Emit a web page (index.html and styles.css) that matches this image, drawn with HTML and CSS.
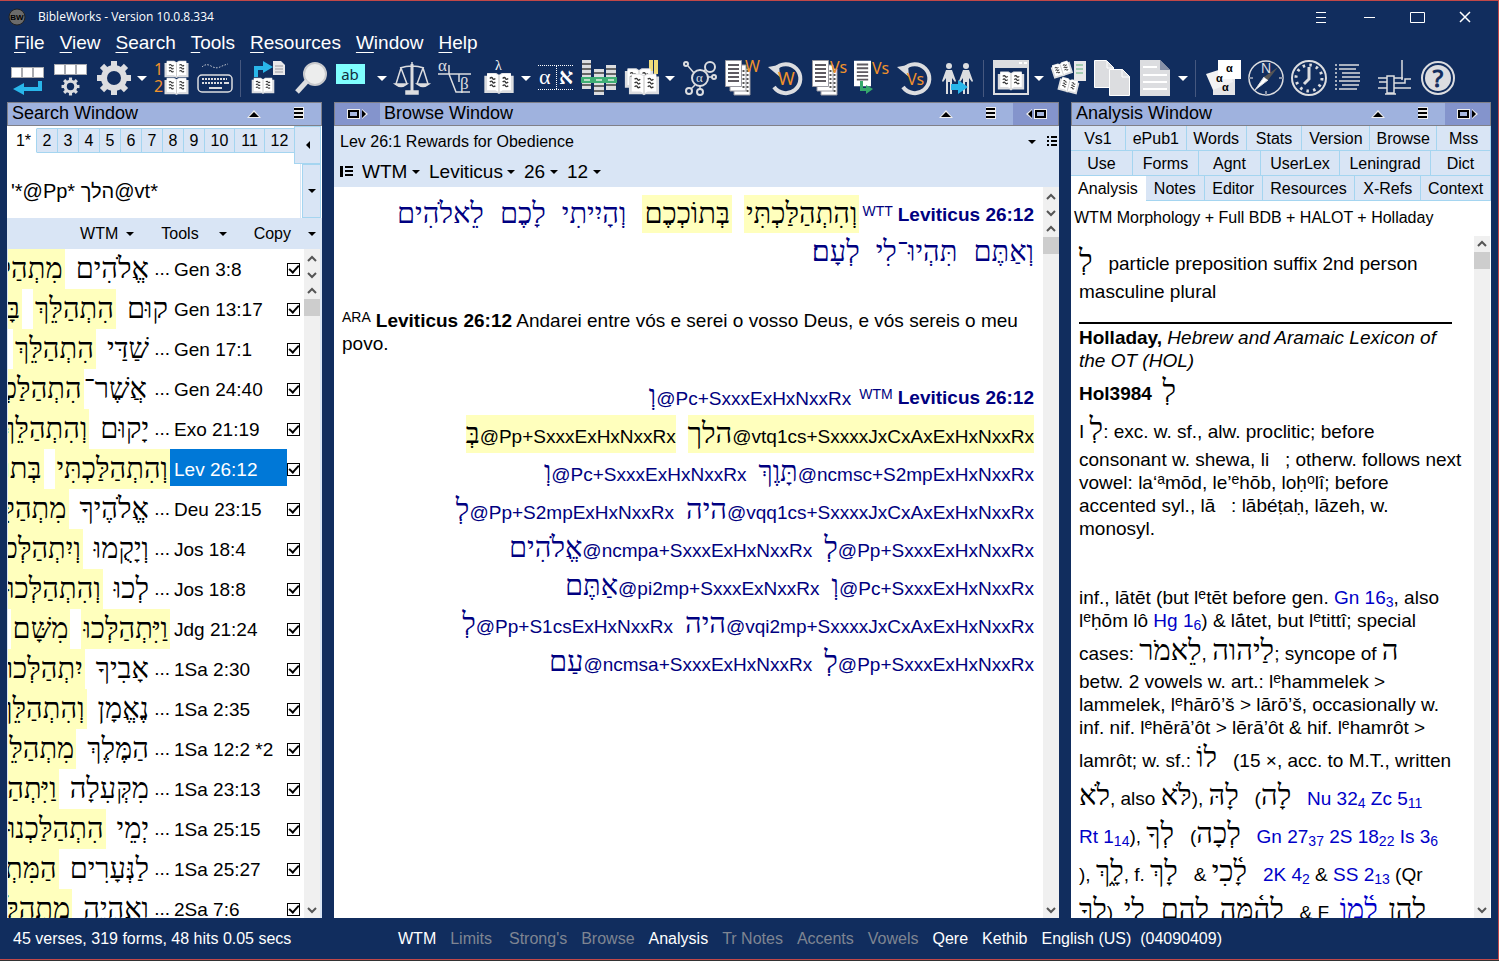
FILE: index.html
```html
<!DOCTYPE html>
<html lang="en">
<head>
<meta charset="utf-8">
<title>BibleWorks - Version 10.0.8.334</title>
<link rel="stylesheet" href="styles.css">
</head>
<body>
<svg class="defs" aria-hidden="true">
  <symbol id="gear" viewBox="-18 -18 36 36">
    <g fill="#dcdde0"><rect x="-3" y="-17" width="6" height="34"/><rect x="-3" y="-17" width="6" height="34" transform="rotate(45)"/><rect x="-3" y="-17" width="6" height="34" transform="rotate(90)"/><rect x="-3" y="-17" width="6" height="34" transform="rotate(135)"/><circle r="13"/></g>
    <circle r="7" fill="#112d5e"/>
  </symbol>
  <symbol id="book" viewBox="0 0 34 24">
    <path d="M1 4h3V1h10l3 2 3-2h10v3h3v19H19l-2 1-2-1H1z" fill="#dcdde0"/>
    <path d="M4 2h9l4 2v18l-4-2H4zM30 2h-9l-4 2v18l4-2h9z" fill="#fff"/>
    <path d="M17 4v18" stroke="#bbb" stroke-width="1"/>
    <path d="M7 7q2-2 3 0t3 0M7 11q2-2 3 0t3 0M7 15q2-2 3 0t3 0M21 7q2-2 3 0t3 0M21 11q2-2 3 0t3 0M21 15q2-2 3 0t3 0" fill="none" stroke="#333" stroke-width="1.5"/>
  </symbol>
  <symbol id="page" viewBox="0 0 18 27">
    <path d="M0 0h18v27H0z" fill="#fff"/><path d="M3 4h12M3 8h12M3 12h12M3 16h12M3 20h12" stroke="#5f5b62" stroke-width="2"/>
  </symbol>
  <symbol id="pages" viewBox="0 0 26 36">
    <g fill="#fff" stroke="#9a9aa2" stroke-width="1"><path d="M9 9h16v26H9z"/><path d="M5 5h16v26H5z"/><path d="M.5.5h16v26H.5z"/></g>
    <path d="M3 5h11M3 9h11M3 13h11M3 17h11M3 21h11" stroke="#5f5b62" stroke-width="2"/><path d="M18.500 10v18M22.500 10v22" stroke="#555" stroke-width="2" stroke-dasharray="2 2"/>
  </symbol>
  <symbol id="loop" viewBox="0 0 36 36">
    <path d="M7 9A14.500 14.500 0 1 1 6 27" fill="none" stroke="#dcdde0" stroke-width="4"/><path d="M0 7l11-2 1 12z" fill="#dcdde0"/>
  </symbol>
  <symbol id="person" viewBox="0 0 14 32">
    <circle cx="7" cy="3" r="3" fill="#dcdde0"/><path d="M4 7h6l4 11-1 1-3-4v16H8V19H6v12H4V15l-3 4-1-1z" fill="#dcdde0"/>
  </symbol>
  <symbol id="up" viewBox="0 0 16 16"><path d="M4 10l4-4 4 4" fill="none" stroke="#555" stroke-width="2"/></symbol>
  <symbol id="down" viewBox="0 0 16 16"><path d="M4 6l4 4 4-4" fill="none" stroke="#555" stroke-width="2"/></symbol>
  <symbol id="raise" viewBox="0 0 16 12"><path d="M1 10l7-8 7 8z" fill="#eee"/><path d="M3 9l5-5 5 5z" fill="#000"/></symbol>
  <symbol id="bars" viewBox="0 0 12 14"><path d="M1 2h10M1 6h10M1 10h10" stroke="#eee" stroke-width="4"/><path d="M1 2h9M1 6h9M1 10h9" stroke="#000" stroke-width="2"/></symbol>
  <symbol id="dock" viewBox="0 0 22 12"><path d="M1.500 2.500h10v7h-10z" fill="none" stroke="#eee" stroke-width="3"/><path d="M2 3h9v6H2z" fill="#a8b8e0" stroke="#000" stroke-width="2"/><path d="M15 1v10l6-5z" fill="#eee"/><path d="M15 2v8l4-4z"/></symbol>
</svg>

<div class="app">
  <header class="titlebar">
    <svg class="logo" viewBox="0 0 18 18"><circle cx="9" cy="9" r="8" fill="#6b6b6b" stroke="#222" stroke-width="1"/><text x="9" y="12" text-anchor="middle" font-size="8" font-weight="bold" font-family="Liberation Sans">BW</text></svg>
    <h1>BibleWorks - Version 10.0.8.334</h1>
    <div class="winbtns">
      <button aria-label="Options"><svg viewBox="0 0 16 16"><path d="M3 3.500h10M3 8.500h10M3 13.500h10" stroke="#fff"/></svg></button>
      <button aria-label="Minimize"><svg viewBox="0 0 16 16"><path d="M3 8.500h11" stroke="#fff"/></svg></button>
      <button aria-label="Maximize"><svg viewBox="0 0 16 16"><path d="M1.500 3.500h14v10h-14z" fill="none" stroke="#fff"/></svg></button>
      <button aria-label="Close"><svg viewBox="0 0 16 16"><path d="M3 3l10 10M13 3L3 13" stroke="#fff" stroke-width="1.500"/></svg></button>
    </div>
  </header>

  <nav class="menubar">
    <button><u>F</u>ile</button><button><u>V</u>iew</button><button><u>S</u>earch</button><button><u>T</u>ools</button><button><u>R</u>esources</button><button><u>W</u>indow</button><button><u>H</u>elp</button>
  </nav>

  <div class="toolbar" role="toolbar">
    <button aria-label="Command line"><svg viewBox="0 0 36 36"><path d="M1 7h33v11H1z" fill="#a9abb0"/><path d="M2 8h9v9H2zM13 8h9v9h-9zM24 8h9v9h-9z" fill="#fff"/><path d="M28 21h4v10H14v4L3 29l11-6v4h14z" fill="#29b6ea"/></svg></button>
    <button aria-label="Command options"><svg viewBox="0 0 36 36"><path d="M1 4h33v11H1z" fill="#a9abb0"/><path d="M2 5h9v9H2zM13 5h9v9h-9zM24 5h9v9h-9z" fill="#fff"/><use href="#gear" x="8" y="17" width="19" height="19"/></svg></button>
    <button aria-label="Setup"><svg viewBox="0 0 36 36"><use href="#gear" x="0" y="0" width="36" height="36"/></svg></button>
    <button class="dd" aria-label="Setup menu"></button>
    <button aria-label="Parallel versions"><svg viewBox="0 0 36 36"><text class="or" x="0" y="15" font-size="16">1</text><text class="or" x="0" y="32" font-size="16">2</text><use href="#book" x="9" y="0" width="27" height="18"/><use href="#book" x="9" y="17" width="27" height="18"/></svg></button>
    <button aria-label="Keyboard"><svg viewBox="0 0 36 36"><g fill="none" stroke="#dcdde0"><rect x="1" y="15" width="34" height="17" rx="4" stroke-width="1.500"/><path d="M5 7q4-4 9-1t9 1 8-3" stroke-dasharray="1.500 1.500"/><path d="M5 19h25M5 23h20" stroke-width="2" stroke-dasharray="2 1"/><path d="M27 23h5M12 28h13" stroke-width="2"/></g></svg></button>
    <span class="sep"></span>
    <button aria-label="Copy to editor"><svg viewBox="0 0 36 36"><path d="M4 17V6h9V1l10 6-10 6V10H8v7z" fill="#29b6ea"/><path d="M23 1h8l4 4v10H23z" fill="#e8e8ea"/><path d="M25 6h8M25 9h8M25 12h8" stroke="#9a9aa2"/><use href="#book" x="1" y="17" width="24" height="17"/></svg></button>
    <button aria-label="Find"><svg viewBox="0 0 36 36"><circle cx="22" cy="14" r="11" fill="#eceded" stroke="#c9cacd" stroke-width="2"/><path d="M14 21L4 32" stroke="#dcdde0" stroke-width="5"/></svg></button>
    <button aria-label="Highlight"><svg viewBox="0 0 36 36"><path d="M0 4h29v20H0z" fill="#80ffff"/><text x="14" y="20" text-anchor="middle" font-size="15" font-family="Noto Sans" fill="#112d3e">ab</text></svg></button>
    <button class="dd" aria-label="Highlight menu"></button>
    <button aria-label="Compare"><svg viewBox="0 0 36 36" fill="none" stroke="#dcdde0" stroke-width="1.500"><path d="M18 2v30M6 8q12-4 24 0M7 8L2 24M7 8l6 16M29 8l-6 16M29 8l5 16"/><path d="M1 24h12q-6 5-12 0zM23 24h12q-6 5-12 0zM12 31h12v3H12z" fill="#dcdde0"/><path d="M18 4v28" stroke-width="3"/></svg></button>
    <button aria-label="Alpha beta"><svg viewBox="0 0 36 36" fill="#dcdde0"><path d="M1 14h33M12 5v9M12 14l7 18h14M22 14v8" fill="none" stroke="#dcdde0" stroke-width="1.500"/><text x="1" y="11" font-size="17" font-family="Liberation Serif">α</text><text x="23" y="29" font-size="17" font-family="Liberation Serif">β</text></svg></button>
    <button aria-label="Lexicon"><svg viewBox="0 0 36 36"><text x="15" y="10" font-size="14" font-family="Liberation Serif" fill="#fff">λ</text><use href="#book" x="3" y="12" width="32" height="22"/></svg></button>
    <button class="dd" aria-label="Lexicon menu"></button>
    <button aria-label="Interlinear"><svg viewBox="0 0 36 36" fill="#fff"><path d="M0 5.500h36M0 29.500h36M18.500 6v23" stroke="#fff" stroke-dasharray="1 1"/><text x="1" y="24" font-size="22" font-family="Liberation Serif">α</text><text x="21" y="24" font-size="22" font-weight="bold" font-family="Liberation Serif">א</text></svg></button>
    <button aria-label="Stack"><svg viewBox="0 0 36 36"><path d="M1 0h9v29H1zM13 9h10v26H13zM25 5h10v25H25z" fill="#dcdde0"/><path d="M1 4h9M1 9h9M1 14h9M1 25h9M13 13h10M13 26h10M13 31h10M25 9h10M25 14h10M25 25h10" stroke="#666" stroke-width="2"/><path d="M0 17h36v6H0z" fill="#3fae74"/><path d="M3 20h6M15 20h6M27 20h6" stroke="#b6e0c4" stroke-width="2"/></svg></button>
    <button aria-label="Notebooks"><svg viewBox="0 0 36 36"><path d="M25 0h4v14h-4zM30 0h4v14h-4z" fill="#f2dd79"/><use href="#book" x="0" y="7" width="30" height="22"/><use href="#book" x="4" y="12" width="32" height="24"/></svg></button>
    <button class="dd" aria-label="Notebooks menu"></button>
    <button aria-label="Graph"><svg viewBox="0 0 36 36" fill="none" stroke="#dcdde0" stroke-width="2"><circle cx="18" cy="18" r="8"/><circle cx="28" cy="7" r="5"/><circle cx="4" cy="4" r="2"/><circle cx="32" cy="17" r="2"/><circle cx="7" cy="31" r="3"/><circle cx="18" cy="32" r="3"/><path d="M6 6l6 7M22 11l2-2M26 17h4M13 25l-4 4M18 26v3" stroke-width="1.500"/><text x="14" y="22" font-size="13" fill="#dcdde0" stroke="none" font-family="Liberation Serif">α</text></svg></button>
    <button aria-label="Word list"><svg viewBox="0 0 36 36"><use href="#pages" x="0" y="0" width="26" height="36"/><text class="or" x="20" y="12" font-size="16">W</text></svg></button>
    <button aria-label="Word history"><svg viewBox="0 0 36 36"><use href="#loop" x="0" y="0" width="36" height="36"/><text class="or" x="10" y="25" font-size="18">W</text></svg></button>
    <button aria-label="Verse list"><svg viewBox="0 0 36 36"><use href="#pages" x="1" y="0" width="26" height="36"/><text class="or" x="19" y="13" font-size="16">Vs</text></svg></button>
    <button aria-label="Go to verse"><svg viewBox="0 0 36 36"><use href="#page" x="0" y="0" width="17" height="27"/><text class="or" x="18" y="14" font-size="16">Vs</text><path d="M6 21v10h6v3l7-5-7-4v3H9v-7z" fill="#36a96c"/></svg></button>
    <button aria-label="Verse history"><svg viewBox="0 0 36 36"><use href="#loop" x="0" y="0" width="36" height="36"/><text class="or" x="10" y="25" font-size="16">Vs</text></svg></button>
    <button aria-label="Synchronize"><svg viewBox="0 0 36 36"><use href="#person" x="2" y="3" width="14" height="32"/><use href="#person" x="19" y="3" width="14" height="32"/><path d="M11 24h7v-4l10 7-10 7v-4h-7z" fill="#29b6ea"/></svg></button>
    <span class="sep"></span>
    <button aria-label="Resource window"><svg viewBox="0 0 36 36"><path d="M1 1h34v33H1z" fill="#112d5e" stroke="#dcdde0" stroke-width="2"/><path d="M0 0h36v8H0z" fill="#dcdde0"/><path d="M26 2h3v2h-3zM31 2h3v2h-3z" fill="#fff"/><use href="#book" x="4" y="10" width="28" height="21"/></svg></button>
    <button class="dd" aria-label="Resource menu"></button>
    <button aria-label="Arrange"><svg viewBox="0 0 36 36"><use href="#book" x="0" y="2" width="21" height="15" transform="rotate(-18 10 9)"/><use href="#book" x="7" y="18" width="21" height="15" transform="rotate(14 18 26)"/><path d="M23 1h12v20H23z" fill="#e8e8ea"/><path d="M25 5h7M25 9h7M25 13h7" stroke="#8fc3a0" stroke-width="1.500"/></svg></button>
    <button aria-label="Copy"><svg viewBox="0 0 36 36" fill="#dcdde0" stroke="#fff"><path d="M.5.5h12l7 7v20H.5z"/><path d="M15.500 9.500h13l7 7v19h-20z"/><path d="M28 9v8h8M13 1v7h7" fill="none"/></svg></button>
    <button aria-label="Document"><svg viewBox="0 0 36 36"><path d="M3 0h20l10 10v26H3z" fill="#dcdde0"/><path d="M23 0v10h10z" fill="#8791a8"/><path d="M6 7h14M6 15h24M6 22h24M6 29h24" stroke="#fff" stroke-width="2"/></svg></button>
    <button class="dd" aria-label="Document menu"></button>
    <span class="sep"></span>
    <button aria-label="Flashcards"><svg viewBox="0 0 36 36" font-family="Liberation Sans" font-weight="bold" font-size="11"><path d="M8 18h22v17H8z" fill="#e4e4e6"/><path d="M1 14l22-7 5 15-20 8z" fill="#f2f2f3"/><path d="M13 0h23v19H13z" fill="#fff"/><text x="21" y="12">α</text><text x="11" y="22">α</text><text x="17" y="31">α</text></svg></button>
    <button aria-label="Navigate"><svg viewBox="0 0 36 36" fill="none" stroke="#dcdde0"><circle cx="18" cy="18" r="17" stroke-width="1.500"/><path d="M18 31v4M1 18h4M31 18h4" stroke="#8791a8" stroke-width="2"/><path d="M7 30l9-13 4 3z" fill="#fff"/><path d="M16 17L30 7 20 20z" fill="#555" stroke="none"/><text x="13" y="13" font-size="14" fill="#dcdde0" stroke="none" font-family="Liberation Sans">N</text></svg></button>
    <button aria-label="Timeline"><svg viewBox="0 0 36 36" fill="none" stroke="#dcdde0"><circle cx="18" cy="18" r="17" stroke-width="2"/><circle cx="18" cy="18" r="13" stroke-width="3" stroke-dasharray="2.500 4.300"/><path d="M18 7v12l-5 5" stroke-width="3"/></svg></button>
    <button aria-label="Outline"><svg viewBox="0 0 36 36" stroke="#dcdde0" stroke-width="1.500"><path d="M1 5h2M1 9h2M1 13h2M1 17h2M1 21h2M1 25h2M1 29h2M5 5h20M5 9h17M8 13h18M8 17h18M5 21h21M8 25h17M5 29h18"/></svg></button>
    <button aria-label="Diagram"><svg viewBox="0 0 36 36" fill="none" stroke="#dcdde0" stroke-width="1.500"><path d="M25 0v20M1 18h9M2 22h8M1 28h9M10 16h7v17h-7zM17 18h9M17 23h8M17 28h17M25 23h3v-4h6M8 34h11"/></svg></button>
    <button aria-label="Help"><svg viewBox="0 0 36 36"><circle cx="18" cy="18" r="16" fill="none" stroke="#dcdde0" stroke-width="2"/><circle cx="18" cy="18" r="13" fill="#dcdde0"/><text x="18" y="27" text-anchor="middle" font-size="24" font-family="Noto Sans" fill="#112d5e" stroke="#112d5e">?</text></svg></button>
  </div>

  <main class="panels">
    <section class="panel search">
      <div class="phead"><h2>Search Window</h2><button aria-label="Raise"><svg class="i-raise"><use href="#raise"/></svg></button><button aria-label="Menu"><svg class="i-bars"><use href="#bars"/></svg></button></div>
      <div class="stop">
        <div class="snum"><button class="on">1*</button><button>2</button><button>3</button><button>4</button><button>5</button><button>6</button><button>7</button><button>8</button><button>9</button><button class="w">10</button><button class="w">11</button><button class="w">12</button></div>
        <button class="prev" aria-label="Previous"></button>
        <input class="query" aria-label="Command line" value="'*@Pp* הלך@vt*">
        <button class="hist" aria-label="History"></button>
      </div>
      <div class="sbar"><button class="caret">WTM</button><button class="caret t">Tools</button><button class="caret">Copy</button></div>
      <div class="sbody">
        <ul class="hits">
          <li><div class="hx"><i>...</i><b>אֱלֹהִים</b><mark>מִתְהַלֵּךְ</mark></div><label for="c1">Gen 3:8</label><input id="c1" type="checkbox" checked></li>
          <li><div class="hx"><b>קוּם</b><mark>הִתְהַלֵּךְ</mark><mark>בָּאָרֶץ</mark></div><label for="c2">Gen 13:17</label><input id="c2" type="checkbox" checked></li>
          <li><div class="hx"><i>...</i><b>שַׁדַּי</b><mark>הִתְהַלֵּךְ</mark></div><label for="c3">Gen 17:1</label><input id="c3" type="checkbox" checked></li>
          <li><div class="hx"><i>...</i><span class="joined"><b>אֲשֶׁר־</b><mark>הִתְהַלַּכְתִּי</mark></span></div><label for="c4">Gen 24:40</label><input id="c4" type="checkbox" checked></li>
          <li><div class="hx"><i>...</i><b>יָקוּם</b><mark>וְהִתְהַלֵּךְ</mark></div><label for="c5">Exo 21:19</label><input id="c5" type="checkbox" checked></li>
          <li class="sel"><div class="hx"><mark>וְהִתְהַלַּכְתִּי</mark><mark>בְּתוֹכְכֶם</mark></div><label for="c6">Lev 26:12</label><input id="c6" type="checkbox" checked></li>
          <li><div class="hx"><i>...</i><b>אֱלֹהֶיךָ</b><mark>מִתְהַלֵּךְ</mark></div><label for="c7">Deu 23:15</label><input id="c7" type="checkbox" checked></li>
          <li><div class="hx"><i>...</i><b>וְיָקֻמוּ</b><mark>וְיִתְהַלְּכוּ</mark></div><label for="c8">Jos 18:4</label><input id="c8" type="checkbox" checked></li>
          <li><div class="hx"><i>...</i><b>לְכוּ</b><mark>וְהִתְהַלְּכוּ</mark></div><label for="c9">Jos 18:8</label><input id="c9" type="checkbox" checked></li>
          <li><div class="hx"><mark>וַיִּתְהַלְּכוּ</mark><mark>מִשָּׁם</mark></div><label for="c10">Jdg 21:24</label><input id="c10" type="checkbox" checked></li>
          <li><div class="hx"><i>...</i><b>אָבִיךָ</b><mark>יִתְהַלְּכוּ</mark></div><label for="c11">1Sa 2:30</label><input id="c11" type="checkbox" checked></li>
          <li><div class="hx"><i>...</i><b>נֶאֱמָן</b><mark>וְהִתְהַלֵּךְ</mark></div><label for="c12">1Sa 2:35</label><input id="c12" type="checkbox" checked></li>
          <li><div class="hx"><i>...</i><b>הַמֶּלֶךְ</b><mark>מִתְהַלֵּךְ</mark></div><label for="c13">1Sa 12:2 *2</label><input id="c13" type="checkbox" checked></li>
          <li><div class="hx"><i>...</i><b>מִקְּעִלָה</b><mark>וַיִּתְהַלְּכוּ</mark></div><label for="c14">1Sa 23:13</label><input id="c14" type="checkbox" checked></li>
          <li><div class="hx"><i>...</i><b>יְמֵי</b><mark>הִתְהַלַּכְנוּ</mark></div><label for="c15">1Sa 25:15</label><input id="c15" type="checkbox" checked></li>
          <li><div class="hx"><i>...</i><b>לַנְּעָרִים</b><mark>הַמִּתְהַלְּכִים</mark></div><label for="c16">1Sa 25:27</label><input id="c16" type="checkbox" checked></li>
          <li><div class="hx"><i>...</i><b>וָאֶהְיֶה</b><mark>מִתְהַלֵּךְ</mark></div><label for="c17">2Sa 7:6</label><input id="c17" type="checkbox" checked></li>
        </ul>
        <div class="scroll split"><button aria-label="Previous"><svg><use href="#up"/></svg></button><button aria-label="Next"><svg><use href="#down"/></svg></button><button aria-label="Scroll up"><svg><use href="#up"/></svg></button><span class="thumb"></span><button class="end" aria-label="Scroll down"><svg><use href="#down"/></svg></button></div>
      </div>
    </section>

    <section class="panel browse">
      <div class="phead"><button class="dk" aria-label="Dock left"><svg class="i-dock"><use href="#dock"/></svg></button><h2>Browse Window</h2><button aria-label="Raise"><svg class="i-raise"><use href="#raise"/></svg></button><button aria-label="Menu"><svg class="i-bars"><use href="#bars"/></svg></button><button class="dk" aria-label="Dock right"><svg class="i-dock flip"><use href="#dock"/></svg></button></div>
      <div class="bhead">
        <div class="crumb"><span>Lev 26:1 Rewards for Obedience</span><button class="caret" aria-label="Headings"></button><svg class="dots" viewBox="0 0 10 11"><path d="M0 1h2M4 1h6M0 5h2M4 5h6M0 9h2M4 9h6" stroke="#000" stroke-width="2"/></svg></div>
        <div class="picker"><svg class="plist" viewBox="0 0 13 11"><path d="M0 0h3v11H0z"/><path d="M5 1h8M5 5h8M5 9h8" stroke="#000" stroke-width="2"/></svg>
          <label class="pick"><select aria-label="Version"><option>WTM</option></select></label><label class="pick"><select aria-label="Book"><option>Leviticus</option></select></label><label class="pick"><select aria-label="Chapter"><option>26</option></select></label><label class="pick"><select aria-label="Verse"><option>12</option></select></label>
        </div>
      </div>
      <div class="bbody">
        <div class="verses">
          <div class="vl" dir="rtl"><span class="ref" dir="ltr"><sup>WTT</sup><strong>Leviticus 26:12</strong></span><mark>וְהִתְהַלַּכְתִּי</mark><mark>בְּתוֹכְכֶם</mark><b>וְהָיִיתִי</b><b>לָכֶם</b><b>לֵאלֹהִים</b></div>
          <div class="vl" dir="rtl"><b>וְאַתֶּם</b><b>תִּהְיוּ־לִי</b><b>לְעָם׃</b></div>
          <p class="ara"><sup>ARA</sup><strong>Leviticus 26:12</strong> Andarei entre vós e serei o vosso Deus, e vós sereis o meu povo.</p>
          <div class="ml"><span><b>וְ</b>@Pc+SxxxExHxNxxRx</span><span class="ref"><sup>WTM</sup><strong>Leviticus 26:12</strong></span></div>
          <div class="ml"><mark><b>בְּ</b>@Pp+SxxxExHxNxxRx</mark><mark><b>הלך</b>@vtq1cs+SxxxxJxCxAxExHxNxxRx</mark></div>
          <div class="ml"><span><b>וְ</b>@Pc+SxxxExHxNxxRx</span><span><b>תָּוֶךְ</b>@ncmsc+S2mpExHxNxxRx</span></div>
          <div class="ml"><span><b>לְ</b>@Pp+S2mpExHxNxxRx</span><span><b>היה</b>@vqq1cs+SxxxxJxCxAxExHxNxxRx</span></div>
          <div class="ml"><span><b>אֱלֹהִים</b>@ncmpa+SxxxExHxNxxRx</span><span><b>לְ</b>@Pp+SxxxExHxNxxRx</span></div>
          <div class="ml"><span><b>אַתֶּם</b>@pi2mp+SxxxExNxxRx</span><span><b>וְ</b>@Pc+SxxxExHxNxxRx</span></div>
          <div class="ml"><span><b>לְ</b>@Pp+S1csExHxNxxRx</span><span><b>היה</b>@vqi2mp+SxxxxJxCxAxExHxNxxRx</span></div>
          <div class="ml"><span><b>עַם</b>@ncmsa+SxxxExHxNxxRx</span><span><b>לְ</b>@Pp+SxxxExHxNxxRx</span></div>
        </div>
        <div class="scroll split"><button aria-label="Previous verse"><svg><use href="#up"/></svg></button><button aria-label="Next verse"><svg><use href="#down"/></svg></button><button aria-label="Scroll up"><svg><use href="#up"/></svg></button><span class="thumb"></span><button class="end" aria-label="Scroll down"><svg><use href="#down"/></svg></button></div>
      </div>
    </section>

    <section class="panel analysis">
      <div class="phead"><h2>Analysis Window</h2><button aria-label="Raise"><svg class="i-raise"><use href="#raise"/></svg></button><button aria-label="Menu"><svg class="i-bars"><use href="#bars"/></svg></button><button class="dk" aria-label="Dock"><svg class="i-dock"><use href="#dock"/></svg></button></div>
      <div class="tabs r1"><button>Vs1</button><button>ePub1</button><button>Words</button><button>Stats</button><button>Version</button><button>Browse</button><button>Mss</button></div>
      <div class="tabs r2"><button>Use</button><button>Forms</button><button>Agnt</button><button>UserLex</button><button>Leningrad</button><button>Dict</button></div>
      <div class="tabs r3"><button class="on">Analysis</button><button>Notes</button><button>Editor</button><button>Resources</button><button>X-Refs</button><button>Context</button></div>
      <div class="asub">WTM Morphology + Full BDB + HALOT + Holladay</div>
      <div class="abody">
        <div class="lex">
          <div class="h"><b>לְ</b>&nbsp;&nbsp; particle preposition suffix 2nd person</div>
          <div>masculine plural</div>
          <hr>
          <div><strong>Holladay,</strong> <em>Hebrew and Aramaic Lexicon of</em></div>
          <div><em>the OT (HOL)</em></div>
          <div class="h"><strong>Hol3984</strong> &nbsp;<b>לְ</b></div>
          <div class="h">I <b>לְ</b>: exc. w. sf., alw. proclitic; before</div>
          <div>consonant w. shewa, li &nbsp; ; otherw. follows next</div>
          <div>vowel: la‘<sup>a</sup>mōd, le’<sup>e</sup>hōb, loḥ<sup>o</sup>lî; before</div>
          <div>accented syl., lā &nbsp; : lābéṭaḥ, lāzeh, w.</div>
          <div class="last">monosyl.</div>
          <div>inf., lātēt (but l<sup>e</sup>tēt before gen. <a href="#">Gn 16<sub>3</sub></a>, also</div>
          <div>l<sup>e</sup>ḥōm lô <a href="#">Hg 1<sub>6</sub></a>) &amp; lā́tet, but l<sup>e</sup>tittî; special</div>
          <div class="h">cases: <b>לֵאמֹר</b>, <b>לַיהוה</b>; syncope of <b>ה</b></div>
          <div>betw. 2 vowels w. art.: l<sup>e</sup>hammelek &gt;</div>
          <div>lammelek, l<sup>e</sup>hārō’š &gt; lārō’š, occasionally w.</div>
          <div>inf. nif. l<sup>e</sup>hērā’ôt &gt; lērā’ôt &amp; hif. l<sup>e</sup>hamrôt &gt;</div>
          <div class="h">lamrôt; w. sf.: <b>לוֹ</b>&nbsp;&nbsp; (15 ×, acc. to M.T., written</div>
          <div class="h"><b>לֹא</b>, also <b>לֹּא</b>), <b>לָהּ</b>&nbsp;&nbsp; (<b>לָה</b>&nbsp;&nbsp; <a href="#">Nu 32<sub>4</sub></a> <a href="#">Zc 5<sub>11</sub></a></div>
          <div class="h"><a href="#">Rt 1<sub>14</sub></a>), <b>לְךָ</b>&nbsp;&nbsp; (<b>לְכָה</b>&nbsp;&nbsp; <a href="#">Gn 27<sub>37</sub></a> <a href="#">2S 18<sub>22</sub></a> <a href="#">Is 3<sub>6</sub></a></div>
          <div class="h">), <b>לָ֑ךְ</b>, f. <b>לָךְ</b>&nbsp;&nbsp; &amp; <b>לָ֫כִי</b>&nbsp;&nbsp; <a href="#">2K 4<sub>2</sub></a> &amp; <a href="#">SS 2<sub>13</sub></a> (Qr</div>
          <div class="h"><b>לְךָ</b>) &nbsp;<b>לִי</b>&nbsp;&nbsp; <b>לָהֶם</b>&nbsp; <b>לָהֵ֫מָּה</b>&nbsp;&nbsp; &amp; F &nbsp;<a href="#"><b>לָ֫מוֹ</b></a> &nbsp;<b>לָהֶן</b></div>
        </div>
        <div class="scroll"><button aria-label="Scroll up"><svg><use href="#up"/></svg></button><span class="thumb"></span><button class="end" aria-label="Scroll down"><svg><use href="#down"/></svg></button></div>
      </div>
    </section>
  </main>

  <footer class="status">
    <span class="sum">45 verses, 319 forms, 48 hits 0.05 secs</span>
    <span>WTM</span><span class="off">Limits</span><span class="off strong">Strong's</span><span class="off">Browse</span><span>Analysis</span><span class="off">Tr Notes</span><span class="off">Accents</span><span class="off">Vowels</span><span>Qere</span><span>Kethib</span><span>English (US)&nbsp; (04090409)</span>
  </footer>
</div>
</body>
</html>
```
FILE: styles.css
```css
* { box-sizing: border-box; }
body { margin: 0; font-family: "Liberation Sans", sans-serif; font-size: 19px; color: #000; background: #333; }
button { appearance: none; border: 0; background: none; padding: 0; margin: 0; font: inherit; color: inherit; flex: none; }
h1, h2 { margin: 0; font-weight: normal; }
svg { display: block; overflow: visible; }
.defs { position: absolute; width: 0; height: 0; }
.or { fill: #f0922b; font-family: "Noto Sans", sans-serif; }

.app { display: flex; flex-direction: column; height: calc(100vh - 1px); background: #112d5e; border: 1px solid #c24848; border-left: 0; color: #fff; }

.titlebar { display: flex; align-items: center; height: 31px; padding: 0 25px 0 8px; }
.logo { width: 18px; height: 18px; }
.titlebar h1 { font: 12px "Open Sans", sans-serif; margin-left: 12px; flex: 1; }
.winbtns { display: flex; gap: 32px; }
.winbtns svg { width: 16px; height: 16px; }

.menubar { display: flex; gap: 15px; height: 22px; padding-left: 14px; line-height: 22px; }
.menubar u { text-underline-offset: 3px; text-decoration-thickness: 1px; }

.toolbar { display: flex; height: 48px; padding: 6px 0 0 10px; }
.toolbar button { width: 43px; height: 36px; }
.toolbar svg { width: 36px; height: 36px; }
.toolbar .dd { width: 15px; display: flex; align-items: center; }
.dd::after { content: ""; border: 5px solid transparent; border-top-color: #fff; border-bottom: 0; margin-left: -2px; }
.sep { width: 10px; height: 37px; border-left: 1px solid #46587f; }

.panels { flex: 1; min-height: 0; display: grid; grid-template-columns: 315px minmax(0, 1fr) 420px; gap: 12px; padding: 0 7px; color: #000; }
.panel { display: flex; flex-direction: column; min-height: 0; min-width: 0; background: #fff; }
.phead { display: flex; height: 24px; flex: none; background: #9fb2de; border: 1px solid #808088; line-height: 20px; }
.phead h2 { font-size: 18px; flex: 1; padding-left: 4px; }
.phead button { width: 45px; display: flex; align-items: center; justify-content: center; }
.phead .dk { background: #8494cc; }
.i-raise { width: 16px; height: 12px; }
.i-bars { width: 12px; height: 14px; }
.i-dock { width: 22px; height: 12px; }
.flip { transform: scaleX(-1); }

.stop { display: grid; grid-template-columns: minmax(0, 1fr) 8px 19px; grid-template-rows: 38px 54px; flex: none; padding-right: 1px; }
.snum { display: flex; font-size: 16px; padding-top: 2px; align-items: flex-start; }
.snum button { width: 21px; height: 25px; background: #d9e5f5; border: 1px solid #a5d5f0; border-left-width: 0; }
.snum .on { width: 30px; padding-left: 4px; background: #fff; border-color: #fff #a5d5f0 #fff #fff; }
.snum .w { width: 30px; }
.prev { grid-column: 2 / 4; border: 1px solid #a5d5f0; background: #d9e5f5; display: grid; place-items: center; }
.prev::after { content: ""; border: 4px solid transparent; border-right-color: #000; border-left: 0; }
.query { grid-column: 1 / 3; border: 0; border-right: 1px solid #d9e5f5; margin-right: 1px; padding: 0 4px; font: 20px "Liberation Sans", sans-serif; outline: 0; min-width: 0; }
.hist { grid-column: 3; border: 1px solid #a5d5f0; background: #d9e5f5; display: grid; place-items: center; }
.hist::after, .caret::after, .pick::after { content: ""; border: 4px solid transparent; border-top-color: #000; border-bottom: 0; }
.caret, .pick { display: flex; align-items: center; gap: 8px; }
.sbar { display: flex; justify-content: flex-end; gap: 27px; height: 31px; flex: none; background: #d9e5f5; font-size: 16px; padding-right: 6px; }
.sbar .caret { gap: 8px; }
.sbar .t { gap: 20px; }
.sbar .caret:last-child { gap: 17px; }

.sbody, .bbody, .abody { display: flex; flex: 1; min-height: 0; }
.sbody { border-right: 2px solid #d9e5f5; border-left: 1px solid #d9e5f5; }
.hits { list-style: none; margin: 0; padding: 0; flex: 1; min-width: 0; overflow: hidden; }
.hits li { display: flex; height: 40px; }
.hx { direction: rtl; width: 162px; height: 40px; display: flex; gap: 11px; overflow: hidden; line-height: 38px; flex: none; }
.hx i { font-style: normal; width: 14px; line-height: 40px; }
.hx i + * { margin-right: -4px; }
.hx b:first-child { margin-right: 2px; }
.joined { display: flex; }
b { font-family: "Liberation Serif", serif; font-weight: normal; font-size: 29px; white-space: nowrap; unicode-bidi: isolate; }
mark { background: #ffffbd; color: #000; white-space: nowrap; }
.hx mark, .vl mark { font-family: "Liberation Serif", serif; font-size: 29px; padding: 0 2px; }
.hits label { flex: 1; height: 37px; padding-left: 4px; line-height: 41px; white-space: nowrap; }
.sel label { background: #0078d7; color: #fff; }
input[type=checkbox] { appearance: none; width: 13px; height: 13px; border: 1px solid #000; margin: 14px 4px 0 0; flex: none; display: grid; place-items: center; }
input[type=checkbox]::after { content: ""; width: 4px; height: 8px; border: solid #000; border-width: 0 2px 2px 0; transform: rotate(42deg); margin-top: -3px; }

.scroll { width: 16px; flex: none; background: #f0f0f0; display: flex; flex-direction: column; }
.scroll svg { width: 16px; height: 16px; }
.thumb { height: 17px; background: #cdcdcd; }
.end { margin-top: auto; }
.split { padding-top: 2px; }

.bhead { background: #d9e5f5; height: 61px; flex: none; }
.crumb { display: flex; align-items: center; height: 31px; font-size: 16px; padding: 0 2px 0 6px; }
.crumb span { flex: 1; }
.dots { width: 10px; height: 11px; margin-left: 11px; }
.picker { display: flex; align-items: center; gap: 9px; height: 29px; padding-left: 6px; }
.plist { width: 13px; height: 11px; }
.pick { gap: 4px; }
.pick select { appearance: none; border: 0; background: none; font: inherit; padding: 0; margin: 0; color: #000; }
.verses { flex: 1; min-width: 0; padding: 8px 9px 0 8px; }
.vl, .ml { display: flex; height: 38px; line-height: 36px; color: navy; white-space: nowrap; }
.vl { gap: 12px; }
.vl b { margin-right: 4px; }
.vl b:first-child { margin-right: 0; }
.ml { justify-content: flex-end; gap: 12px; }
.verses sup { font-size: 14px; line-height: 0; vertical-align: 5px; margin-right: 5px; }
.vl .ref { margin-left: -9px; line-height: 40px; }
.ml .ref { margin-left: -4px; line-height: 42px; }
.ara { margin: 38px 0 22px; line-height: 23px; }

.tabs { display: grid; height: 25px; font-size: 16px; flex: none; }
.r1 { grid-template-columns: 55fr 61fr 60fr 56fr 68fr 67fr 54fr; }
.r2 { grid-template-columns: 62fr 66fr 62fr 79fr 91fr 60fr; }
.r3 { grid-template-columns: 75fr 59fr 58fr 93fr 66fr 70fr; }
.tabs button { background: #d9e5f5; border: 0 solid #a5d5f0; border-width: 0 1px 1px 0; padding-top: 1px; }
.tabs .on { background: #fff; border-color: #fff; }
.asub { height: 35px; line-height: 33px; font-size: 16px; padding-left: 3px; flex: none; }
.abody { padding-right: 1px; }
.lex { flex: 1; min-width: 0; overflow: hidden; padding: 5px 0 0 8px; white-space: nowrap; }
.lex div { height: 23px; line-height: 25px; }
.lex .h { height: 38px; line-height: 39px; }
.lex hr { border: 0; height: 2px; background: #000; margin: 20px 22px 1px 0; }
.lex .last { margin-bottom: 46px; }
.lex sup, .lex sub { font-size: 14px; line-height: 0; }
.lex sup { vertical-align: 5px; }
.lex sub { vertical-align: -3px; }
.lex a { color: #0000c8; text-decoration: none; }

.status { display: flex; gap: 14px; height: 41px; align-items: center; padding-left: 13px; font-size: 16px; white-space: nowrap; }
.sum { width: 371px; }
.off { color: #7f8592; }
.strong { margin-left: 3px; }
```
